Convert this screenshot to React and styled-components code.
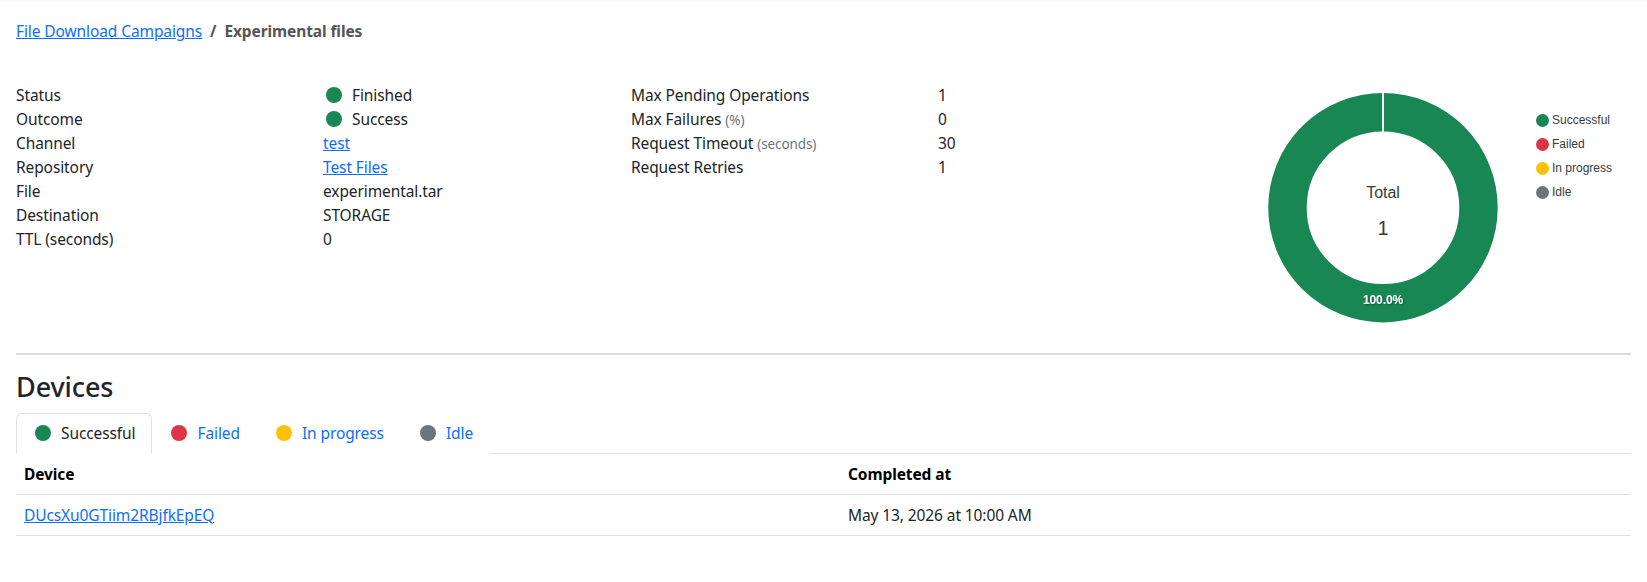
import React from "react";
import styled, { createGlobalStyle } from "styled-components";

const GlobalStyle = createGlobalStyle`
  html, body { margin: 0; padding: 0; background: #fff; }
  body {
    font-family: "Noto Sans", "Open Sans", sans-serif;
    font-size: 15.5px;
    line-height: 24px;
    letter-spacing: -0.1px;
    color: #212529;
  }
  * { box-sizing: border-box; }
`;

const COLORS = {
  success: "#198754",
  failed: "#dc3545",
  progress: "#ffc107",
  idle: "#6c757d",
};

const Page = styled.div`
  padding: 19px 16px 0;
  background: linear-gradient(#f6f6f6, #fff 3px);
`;

const Breadcrumb = styled.nav`
  display: flex;
  align-items: center;
  height: 24px;
`;

const Link = styled.a`
  color: #0d6efd;
  text-decoration: underline;
  cursor: pointer;
`;

const Divider = styled.span`
  color: #555;
  font-weight: 700;
  padding: 0 8px;
`;

const Current = styled.span`
  color: #555;
  font-weight: 700;
`;

const TopRow = styled.div`
  display: flex;
  justify-content: space-between;
  margin-top: 40px;
`;

const Details = styled.div`
  display: flex;
  align-items: flex-start;
`;

const DetailList = styled.dl`
  display: grid;
  grid-template-columns: ${(p) => p.$cols};
  grid-auto-rows: 24px;
  margin: 0;
`;

const Term = styled.dt`
  font-weight: 400;
  white-space: nowrap;
`;

const Desc = styled.dd`
  margin: 0;
  display: flex;
  align-items: center;
  white-space: nowrap;
`;

const Muted = styled.small`
  font-size: 13.5px;
  color: #6c757d;
  margin-left: 4px;
`;

const StatusDot = styled.span`
  display: inline-block;
  width: 16px;
  height: 16px;
  border-radius: 50%;
  background: ${(p) => p.$color};
  margin: 0 10px 0 3px;
  flex: none;
`;

const ChartWrap = styled.div`
  display: flex;
  width: 368px;
  flex: none;
  margin-top: 1px;
`;

const Legend = styled.ul`
  list-style: none;
  margin: 0 0 0 33px;
  padding: 24px 0 0;
  font-family: "Liberation Sans", Arial, sans-serif;
  font-size: 12px;
  letter-spacing: 0;
  color: #373d3f;
`;

const LegendItem = styled.li`
  display: flex;
  align-items: center;
  height: 24px;
  white-space: nowrap;
`;

const LegendMarker = styled.span`
  width: 13px;
  height: 13px;
  border-radius: 50%;
  background: ${(p) => p.$color};
  margin-right: 3px;
  flex: none;
`;

const Rule = styled.hr`
  border: 0;
  border-top: 2px solid #dcdcdc;
  margin: 20px 0 0;
`;

const Heading = styled.h3`
  font-size: 27px;
  font-weight: 500;
  line-height: 33.6px;
  margin: 15px 0 9px;
  color: #212529;
`;

const TabBar = styled.ul`
  display: flex;
  list-style: none;
  margin: 0;
  padding: 0;
  border-bottom: 1px solid #dee2e6;
`;

const Tab = styled.li`
  display: flex;
  align-items: center;
  padding: 8px 16px;
  height: 41px;
  margin-bottom: -1px;
  border: 1px solid ${(p) => (p.$active ? "#dee2e6" : "transparent")};
  border-bottom-color: ${(p) => (p.$active ? "#fff" : "transparent")};
  border-radius: 6px 6px 0 0;
  background: #fff;
  color: ${(p) => (p.$active ? "#212529" : "#0d6efd")};
  cursor: pointer;
`;

const TabDot = styled.span`
  width: 16px;
  height: 16px;
  border-radius: 50%;
  background: ${(p) => p.$color};
  margin: 0 10px 0 2px;
  flex: none;
`;

const Table = styled.table`
  width: 100%;
  border-collapse: collapse;
  table-layout: fixed;
`;

const Th = styled.th`
  text-align: left;
  font-weight: 700;
  color: #000;
  padding: 8px;
  height: 40px;
  border-bottom: 1px solid #dee2e6;
`;

const Td = styled.td`
  padding: 8px;
  height: 41px;
  border-bottom: 1px solid #dee2e6;
`;

function Donut() {
  const cx = 120;
  const cy = 123.7;
  const rOuter = 114.7;
  const rInner = 76.3;
  const rMid = (rOuter + rInner) / 2;
  return (
    <svg width="240" height="249" viewBox="0 0 240 249">
      <defs>
        <filter id="lblShadow" x="-20%" y="-40%" width="140%" height="180%">
          <feDropShadow dx="1" dy="1" stdDeviation="1" floodColor="#000" floodOpacity="0.45" />
        </filter>
      </defs>
      <circle cx={cx} cy={cy} r={rMid} fill="none" stroke="#198754" strokeWidth={rOuter - rInner} />
      <line x1={cx} y1={cy - rOuter - 1} x2={cx} y2={cy - rInner + 1} stroke="#fff" strokeWidth="2" />
      <text x={cx} y={108} textAnchor="middle" dominantBaseline="central" fontFamily="Liberation Sans, Arial, sans-serif" fontSize="16" fill="#373d3f">
        Total
      </text>
      <text x={cx} y={144} textAnchor="middle" dominantBaseline="central" fontFamily="Liberation Sans, Arial, sans-serif" fontSize="20" fill="#373d3f">
        1
      </text>
      <text x={cx} y={215.7} textAnchor="middle" dominantBaseline="central" fontFamily="Liberation Sans, Arial, sans-serif" fontSize="12" fontWeight="700" fill="#fff" filter="url(#lblShadow)">
        100.0%
      </text>
    </svg>
  );
}

const legend = [
  { label: "Successful", color: COLORS.success },
  { label: "Failed", color: COLORS.failed },
  { label: "In progress", color: COLORS.progress },
  { label: "Idle", color: COLORS.idle },
];

export default function App() {
  return (
    <>
      <GlobalStyle />
      <Page>
        <Breadcrumb>
          <Link>File Download Campaigns</Link>
          <Divider>/</Divider>
          <Current>Experimental files</Current>
        </Breadcrumb>

        <TopRow>
          <Details>
            <DetailList $cols="307px 308px">
              <Term>Status</Term>
              <Desc><StatusDot $color={COLORS.success} />Finished</Desc>
              <Term>Outcome</Term>
              <Desc><StatusDot $color={COLORS.success} />Success</Desc>
              <Term>Channel</Term>
              <Desc><Link>test</Link></Desc>
              <Term>Repository</Term>
              <Desc><Link>Test Files</Link></Desc>
              <Term>File</Term>
              <Desc>experimental.tar</Desc>
              <Term>Destination</Term>
              <Desc>STORAGE</Desc>
              <Term>TTL (seconds)</Term>
              <Desc>0</Desc>
            </DetailList>
            <DetailList $cols="307px 100px">
              <Term>Max Pending Operations</Term>
              <Desc>1</Desc>
              <Term>Max Failures<Muted>(%)</Muted></Term>
              <Desc>0</Desc>
              <Term>Request Timeout<Muted>(seconds)</Muted></Term>
              <Desc>30</Desc>
              <Term>Request Retries</Term>
              <Desc>1</Desc>
            </DetailList>
          </Details>

          <ChartWrap>
            <Donut />
            <Legend>
              {legend.map((l) => (
                <LegendItem key={l.label}>
                  <LegendMarker $color={l.color} />
                  {l.label}
                </LegendItem>
              ))}
            </Legend>
          </ChartWrap>
        </TopRow>

        <Rule />

        <Heading>Devices</Heading>

        <TabBar>
          {legend.map((l, i) => (
            <Tab key={l.label} $active={i === 0}>
              <TabDot $color={l.color} />
              {l.label}
            </Tab>
          ))}
        </TabBar>

        <Table>
          <colgroup>
            <col style={{ width: "824px" }} />
            <col />
          </colgroup>
          <thead>
            <tr>
              <Th>Device</Th>
              <Th>Completed at</Th>
            </tr>
          </thead>
          <tbody>
            <tr>
              <Td><Link>DUcsXu0GTiim2RBjfkEpEQ</Link></Td>
              <Td>May 13, 2026 at 10:00 AM</Td>
            </tr>
          </tbody>
        </Table>
      </Page>
    </>
  );
}
